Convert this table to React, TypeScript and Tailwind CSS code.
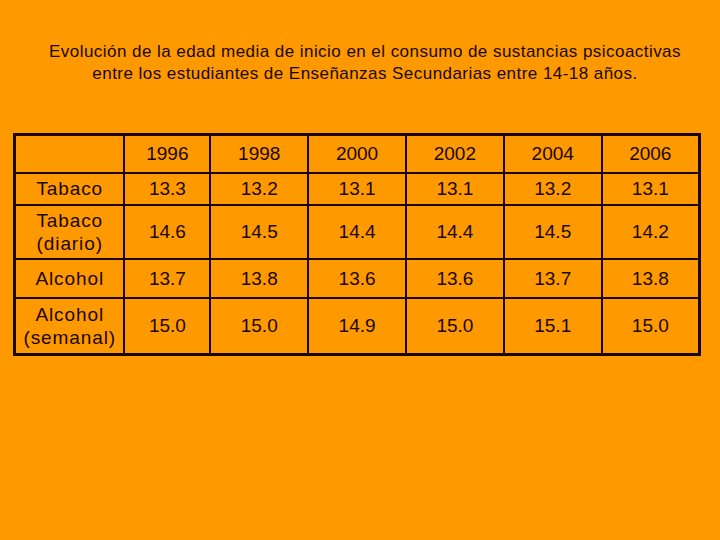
import React from 'react';

const years = ['1996', '1998', '2000', '2002', '2004', '2006'];

const rows: { label: string[]; values: string[]; h: string }[] = [
  { label: ['Tabaco'], values: ['13.3', '13.2', '13.1', '13.1', '13.2', '13.1'], h: 'h-[32px]' },
  { label: ['Tabaco', '(diario)'], values: ['14.6', '14.5', '14.4', '14.4', '14.5', '14.2'], h: 'h-[54px]' },
  { label: ['Alcohol'], values: ['13.7', '13.8', '13.6', '13.6', '13.7', '13.8'], h: 'h-[39px]' },
  { label: ['Alcohol', '(semanal)'], values: ['15.0', '15.0', '14.9', '15.0', '15.1', '15.0'], h: 'h-[57px]' },
];

export default function App() {
  return (
    <div
      className="w-[720px] h-[540px] bg-[#ff9900] text-[#1a0800] overflow-hidden"
      style={{ fontFamily: '"Liberation Sans", Arial, sans-serif' }}
    >
      {/* Title */}
      <div className="pt-[41px] pl-[10px] text-center text-[17px] leading-[22px] tracking-[0.45px]">
        <p>Evolución de la edad media de inicio en el consumo de sustancias psicoactivas</p>
        <p>entre los estudiantes de Enseñanzas Secundarias entre 14-18 años.</p>
      </div>

      {/* Table */}
      <table className="ml-[13px] mt-[48px] w-[688px] border-collapse border-[3px] border-[#1a0800] text-[19px] leading-[23px]">
        <colgroup>
          <col className="w-[110px]" />
          <col className="w-[86px]" />
          <col className="w-[98px]" />
          <col className="w-[98px]" />
          <col className="w-[98px]" />
          <col className="w-[98px]" />
          <col className="w-[98px]" />
        </colgroup>
        <tbody>
          <tr className="h-[38px]">
            <td className="border-2 border-[#1a0800]" />
            {years.map((y) => (
              <td key={y} className="border-2 border-[#1a0800] text-center align-middle">
                {y}
              </td>
            ))}
          </tr>
          {rows.map((r) => (
            <tr key={r.label.join(' ')} className={r.h}>
              <td className="border-2 border-[#1a0800] text-center align-middle p-0 tracking-[0.9px]">
                {r.label.map((l) => (
                  <div key={l}>{l}</div>
                ))}
              </td>
              {r.values.map((v, i) => (
                <td key={i} className="border-2 border-[#1a0800] text-center align-middle">
                  {v}
                </td>
              ))}
            </tr>
          ))}
        </tbody>
      </table>
    </div>
  );
}
